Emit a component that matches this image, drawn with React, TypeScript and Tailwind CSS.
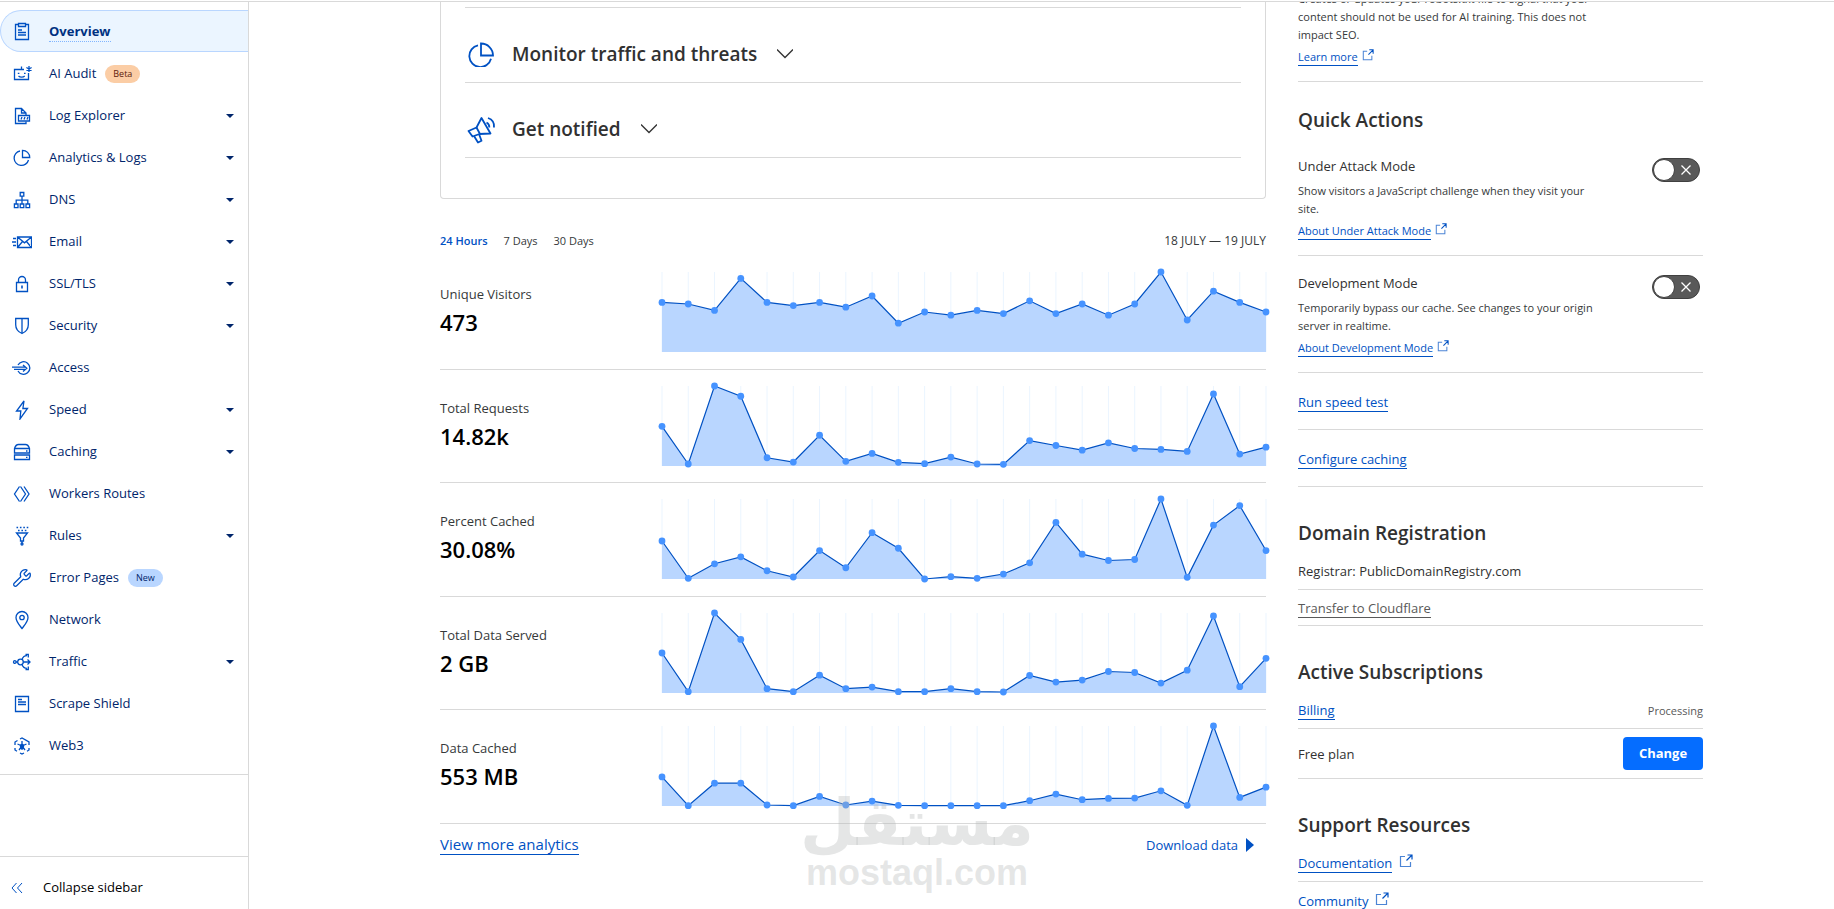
import { useState, type ReactNode } from "react";
import { Wrench } from "lucide-react";

type IconName =
  | "overview"
  | "audit"
  | "log"
  | "pie"
  | "dns"
  | "email"
  | "lock"
  | "shield"
  | "access"
  | "bolt"
  | "cache"
  | "workers"
  | "rules"
  | "wrench"
  | "pin"
  | "traffic"
  | "page"
  | "web3";

const NAV_ITEMS: {
  label: string;
  icon: IconName;
  expandable?: boolean;
  badge?: { text: string; className: string };
}[] = [
  { label: "Overview", icon: "overview" },
  { label: "AI Audit", icon: "audit", badge: { text: "Beta", className: "bg-[#fbcda5] text-[#5c1a0b]" } },
  { label: "Log Explorer", icon: "log", expandable: true },
  { label: "Analytics & Logs", icon: "pie", expandable: true },
  { label: "DNS", icon: "dns", expandable: true },
  { label: "Email", icon: "email", expandable: true },
  { label: "SSL/TLS", icon: "lock", expandable: true },
  { label: "Security", icon: "shield", expandable: true },
  { label: "Access", icon: "access" },
  { label: "Speed", icon: "bolt", expandable: true },
  { label: "Caching", icon: "cache", expandable: true },
  { label: "Workers Routes", icon: "workers" },
  { label: "Rules", icon: "rules", expandable: true },
  { label: "Error Pages", icon: "wrench", badge: { text: "New", className: "bg-[#b9d6ff] text-[#00256b]" } },
  { label: "Network", icon: "pin" },
  { label: "Traffic", icon: "traffic", expandable: true },
  { label: "Scrape Shield", icon: "page" },
  { label: "Web3", icon: "web3" },
];

const METRICS: { label: string; value: string; max: number; points: number[] }[] = [
  {
    label: "Unique Visitors",
    value: "473",
    max: 50,
    points: [31, 30, 26, 46, 31, 29, 31, 28, 35, 18, 25, 23, 26, 24, 32, 24, 30, 23, 30, 50, 20, 38, 31, 25],
  },
  {
    label: "Total Requests",
    value: "14.82k",
    max: 242,
    points: [120, 6, 242, 211, 25, 12, 93, 14, 38, 11, 7, 27, 6, 5, 77, 62, 48, 70, 53, 50, 44, 218, 36, 57],
  },
  {
    label: "Percent Cached",
    value: "30.08%",
    max: 242,
    points: [115, 2, 46, 67, 25, 6, 86, 34, 140, 93, 0, 7, 2, 15, 49, 171, 75, 56, 59, 242, 5, 163, 222, 86],
  },
  {
    label: "Total Data Served",
    value: "2 GB",
    max: 242,
    points: [121, 4, 242, 162, 13, 4, 54, 13, 18, 4, 4, 13, 4, 3, 53, 33, 39, 65, 62, 30, 69, 233, 19, 105],
  },
  {
    label: "Data Cached",
    value: "553 MB",
    max: 242,
    points: [88, 1, 69, 69, 3, 1, 29, 3, 15, 2, 1, 1, 1, 1, 16, 36, 19, 23, 24, 46, 2, 242, 26, 57],
  },
];

const RANGES = ["24 Hours", "7 Days", "30 Days"];

const ICON_PATHS: Record<Exclude<IconName, "wrench">, ReactNode> = {
  overview: (
    <>
      <path d="M6 2.5H3.5v15h13v-15H14" />
      <path d="M6.5 1.5h7v3h-7zM6 8h4M6 10.5h8M6 13h8" />
    </>
  ),
  audit: (
    <>
      <path d="M12 5.5H2.5v10h14V9M9.5 5.5v-3" />
      <path d="M5.8 9.3h1.6M12 9.3h1.6M6.5 12c1.5 1.4 4.8 1.4 6.2 0" />
      <path d="M17 2v6M14.4 3.5l5.2 3M14.4 6.5l5.2-3" />
    </>
  ),
  log: (
    <>
      <path d="M6 17.5H3.5v-15h6l4.5 4.5v2M9.5 2.5V7H14M14 15.5v2H5" />
      <path d="M6.5 9.5h11v5.5h-11z" />
      <path d="M9 13.5l1-2.5M12 13.5l1-2.5M15 13.5l1-2.5" />
    </>
  ),
  pie: (
    <>
      <path d="M8 3a7.3 7.3 0 1 0 8.5 9" />
      <path d="M10.5 2.3v7.2h7.2a7.2 7.2 0 0 0-7.2-7.2z" />
    </>
  ),
  dns: (
    <path d="M8.2 2.5h3.6v3.6H8.2zM2.4 14h3.6v3.6H2.4zM8.2 14h3.6v3.6H8.2zM14 14h3.6v3.6H14zM10 6.1V14M4.2 14v-3.8h11.6V14" />
  ),
  email: (
    <>
      <path d="M5.5 5h14v10.5h-14zM5.5 5l7 5.8 7-5.8M5.5 15.5l5-6M19.5 15.5l-5-6" />
      <path d="M1 6.5h3M0 10h4M1 13.5h3" />
    </>
  ),
  lock: (
    <>
      <path d="M4.5 8.5h11v9h-11zM6.5 8.5V6a3.5 3.5 0 0 1 7 0v2.5" />
      <path d="M10 11.5v3" strokeWidth="1.6" />
    </>
  ),
  shield: <path d="M3.7 2.5h12.6v6.2c0 4.4-2.7 7.2-6.3 8.8-3.6-1.6-6.3-4.4-6.3-8.8zM10 2.5v15" />,
  access: (
    <>
      <path d="M6 7a6.3 6.3 0 1 1 0 6" />
      <path d="M0 9.2h13.5M2 11.4h11.5M11 7l3.8 3.3L11 13.6" />
    </>
  ),
  bolt: <path d="M12 1L4.5 11h4.3L8 19l7.5-10.5h-4.6z" />,
  cache: (
    <>
      <path d="M2.5 6.5c.8-2.500 2-4 4-4h7c2 0 3.200 1.500 4 4V11h-15zM2.5 6.5h15M2.5 13h15v4.5h-15z" />
      <path d="M14 9h1.5M14 15.3h1.5" />
    </>
  ),
  workers: <path d="M7.5 2.5L2.5 10l5 7.5M8.5 2.5l5 7.5-5 7.5M12 2.5l5 7.5-5 7.5" />,
  rules: (
    <>
      <path d="M4.5 1.5h12M6 4.5h9" strokeDasharray="1.6 1.8" />
      <path d="M4.5 7h11l-4 5v3h-3v-3zM10 15v2" />
      <circle cx="10" cy="18" r="1" />
    </>
  ),
  pin: (
    <>
      <path d="M10 18.5C7 14.5 4 11.5 4 7.5a6 6 0 0 1 12 0c0 4-3 7-6 11z" />
      <circle cx="10" cy="7.5" r="2.2" />
    </>
  ),
  traffic: (
    <>
      <circle cx="2.8" cy="10" r="1.3" />
      <circle cx="8.5" cy="10" r="2.8" />
      <path d="M4 10h1.7M11.3 10H18M15.5 7.5L18 10l-2.5 2.5M10 7.5c1-3 2.5-3.8 5-3.8M13.5 2.500h2.8v3M10 12.500c1 3 2.5 3.8 5 3.8M13.5 17.500h2.8v-3" />
    </>
  ),
  page: <path d="M3.5 2.5h13v15h-13zM6 5.500h4M6 8h8M6 10.500h8" />,
  web3: (
    <>
      <path d="M8 3l2-1 7 4v3M17 12v2l-2 1.200M12 17l-2 1-2-1M5 15.200L3 14v-2M3 9V6l2.500-1.500" />
      <path d="M10 5v5M10 10l4.500-2M10 10L5.500 8M10 10l3 4M10 10l-3 4M10 10v4" />
      <circle cx="10" cy="10" r="1.600" fill="currentColor" />
    </>
  ),
};

function NavIcon({ name }: { name: IconName }) {
  if (name === "wrench") {
    return <Wrench className="w-5 h-5 shrink-0 text-[#0051c3]" strokeWidth={1.5} />;
  }
  return (
    <svg
      viewBox="0 0 20 20"
      className="w-5 h-5 shrink-0 text-[#0051c3]"
      fill="none"
      stroke="currentColor"
      strokeWidth="1.3"
      aria-hidden="true"
    >
      {ICON_PATHS[name]}
    </svg>
  );
}

function Sidebar() {
  return (
    <aside className="flex w-[249px] shrink-0 flex-col border-r border-[#d9d9d9] text-[13px]">
      <nav className="border-b border-[#d9d9d9] py-2">
        {NAV_ITEMS.map((item, i) => {
          const active = i === 0;
          return (
            <a
              key={item.label}
              href="#"
              className={`flex h-[42px] items-center pr-[14px] pt-0.5 ${
                active
                  ? "rounded-l-full border-y border-l border-[#b9d6ff] bg-[#ebf5ff] pl-[11px] font-bold text-[#003181]"
                  : "pl-3 text-[#00256b]"
              }`}
            >
              <NavIcon name={item.icon} />
              <span className={`ml-[17px] ${active ? "border-b border-dotted border-[#82b6ff]" : ""}`}>
                {item.label}
              </span>
              {item.badge && (
                <span className={`ml-[9px] flex h-[18px] items-center rounded-full px-2 text-[9px] ${item.badge.className}`}>
                  {item.badge.text}
                </span>
              )}
              {item.expandable && (
                <svg viewBox="0 0 8 4" className="ml-auto h-1 w-2" aria-hidden="true">
                  <path d="M0 0h8L4 4z" fill="#00256b" />
                </svg>
              )}
            </a>
          );
        })}
      </nav>
      <button className="mt-auto flex h-[53px] items-center gap-5 border-t border-[#d9d9d9] pl-[11px] pt-[10px] text-left text-black">
        <svg viewBox="0 0 12 12" className="h-3 w-3" fill="none" stroke="#0051c3" aria-hidden="true">
          <path d="M5.5 1L1 6l4.5 5M11 1L6.5 6l4.5 5" />
        </svg>
        Collapse sidebar
      </button>
    </aside>
  );
}

function AreaChart({ points, max, label }: { points: number[]; max: number; label: string }) {
  const width = 604;
  const height = 80;
  const coords = points.map((p, i) => ({
    x: (i * width) / (points.length - 1),
    y: height - (p / max) * height,
  }));
  const line = coords.map((c) => `${c.x},${c.y}`).join(" ");

  return (
    <svg viewBox={`0 0 ${width} ${height}`} className="min-w-0 flex-1 overflow-visible" role="img" aria-label={label}>
      {coords.map((c) => (
        <line key={c.x} x1={c.x} x2={c.x} y1="0" y2={height} stroke="#ebf5ff" />
      ))}
      <polygon points={`0,${height} ${line} ${width},${height}`} fill="#b9d6ff" />
      <polyline points={line} fill="none" stroke="#0051c3" strokeWidth="1.2" />
      {coords.map((c) => (
        <circle key={c.x} cx={c.x} cy={c.y} r="3.4" fill="#4693ff" />
      ))}
    </svg>
  );
}

function SetupRow({ icon, title }: { icon: ReactNode; title: string }) {
  return (
    <button className="flex w-full items-center border-b border-[#d9d9d9] pb-[14px] pl-[3px] pt-8 text-left">
      {icon}
      <span className="ml-[18px] text-[19px] font-semibold leading-[28px] text-[#313131]">{title}</span>
      <svg
        viewBox="0 0 16 10"
        className="ml-5 h-[10px] w-4"
        fill="none"
        stroke="#313131"
        strokeWidth="1.3"
        aria-hidden="true"
      >
        <path d="M0 .5l8 8 8-8" />
      </svg>
    </button>
  );
}

function Overview() {
  const [range, setRange] = useState(RANGES[0]);

  return (
    <section className="min-w-0 flex-1">
      {/* Setup checklist */}
      <div className="rounded-b border-x border-b border-[#d9d9d9] px-6 pb-10">
        <div className="h-[6px] border-b border-[#d9d9d9]" />
        <SetupRow
          title="Monitor traffic and threats"
          icon={
            <svg viewBox="0 0 26 26" className="h-[26px] w-[26px]" fill="none" stroke="#0051c3" strokeWidth="1.8" aria-hidden="true">
              <path d="M10 4.300a11 11 0 1 0 13 13.500" />
              <path d="M13 2.500V14.500h12A12 12 0 0 0 13 2.500z" />
            </svg>
          }
        />
        <SetupRow
          title="Get notified"
          icon={
            <svg viewBox="0 0 26 26" className="h-[26px] w-[26px] overflow-visible" fill="none" stroke="#0051c3" strokeWidth="1.8" strokeLinejoin="round" aria-hidden="true">
              <path d="M8.500 11.500L13.500 2l9 15.500-11 .500-7 2.500L.500 15z" />
              <path d="M8.500 11.500l3.500 6.500M6 20l4 6.500 3.500-1.800-2.500-6.700" />
              <path d="M18.500 6.500c2 1 3 2.800 2.800 5M20 2c4.500 1.500 6.500 5 6 9.500" />
            </svg>
          }
        />
      </div>

      {/* Range tabs */}
      <div className="mt-[33px] flex gap-4 text-[11px] leading-[18px] text-[#36393a]">
        {RANGES.map((r) => (
          <button key={r} onClick={() => setRange(r)} className={r === range ? "font-semibold text-[#0051c3]" : ""}>
            {r}
          </button>
        ))}
        <span className="ml-auto text-[12px]">18 JULY — 19 JULY</span>
      </div>

      {/* Metrics */}
      <div className="mt-[6px] flex h-[568px] flex-col">
        {METRICS.map((m) => (
          <div key={m.label} className="flex flex-1 items-start border-b border-[#d9d9d9] pt-4">
            <div className="w-[222px] shrink-0 pt-3">
              <div className="text-[13px] leading-5 text-[#36393a]">{m.label}</div>
              <div className="mt-[2px] text-[22px] font-semibold leading-8 text-black">{m.value}</div>
            </div>
            <AreaChart points={m.points} max={m.max} label={m.label} />
          </div>
        ))}
      </div>

      <div className="mt-[10px] flex items-start justify-between pr-3 text-[#0051c3]">
        <a href="#" className="border-b border-[#0051c3] text-[15px] leading-5">
          View more analytics
        </a>
        <button className="flex items-center gap-2 text-[13px] leading-[22px]">
          Download data
          <svg viewBox="0 0 8 14" className="h-[14px] w-2" aria-hidden="true">
            <path d="M0 0l8 7-8 7z" fill="#0051c3" />
          </svg>
        </button>
      </div>
    </section>
  );
}

function ExternalIcon({ className }: { className: string }) {
  return (
    <svg viewBox="0 0 14 14" className={className} fill="none" stroke="#0051c3" strokeWidth="1.2" aria-hidden="true">
      <path d="M6 2.500H1.500v10h10V8" opacity="0.7" />
      <path d="M8.500 1h4.500v4.500M13 1L7.500 6.500" />
    </svg>
  );
}

function SmallLink({ children }: { children: ReactNode }) {
  return (
    <div className="mt-[5px] flex items-start gap-1">
      <a href="#" className="border-b border-[#0051c3] text-[11px] leading-4 text-[#0051c3]">
        {children}
      </a>
      <ExternalIcon className="h-3 w-3" />
    </div>
  );
}

function TextLink({ children, muted }: { children: ReactNode; muted?: boolean }) {
  return (
    <a
      href="#"
      className={`border-b text-[13px] leading-[18px] ${
        muted ? "border-[#595959] text-[#595959]" : "border-[#0051c3] text-[#0051c3]"
      }`}
    >
      {children}
    </a>
  );
}

function Heading({ children }: { children: ReactNode }) {
  return <h2 className="text-[19px] font-semibold leading-[28px] text-[#313131]">{children}</h2>;
}

function ModeSetting({ title, text, link }: { title: string; text: string; link: string }) {
  return (
    <div className="flex items-start justify-between border-b border-[#d9d9d9] pb-[15px] pr-[3px] pt-[17px]">
      <div className="w-[310px]">
        <h3 className="text-[13px] leading-5 text-[#313131]">{title}</h3>
        <p className="mt-[6px] text-[11px] leading-[18px] text-[#36393a]">{text}</p>
        <SmallLink>{link}</SmallLink>
      </div>
      <label className="mt-[2px] flex h-6 w-12 cursor-pointer items-center justify-between rounded-full border border-[#404040] bg-[#595959] pr-2">
        <input type="checkbox" role="switch" aria-label={title} className="sr-only" />
        <span className="h-[22px] w-[22px] rounded-full border border-[#404040] bg-white" />
        <svg viewBox="0 0 10 10" className="h-[10px] w-[10px]" stroke="#fff" strokeWidth="1.3" aria-hidden="true">
          <path d="M.5.5l9 9M9.5.5l-9 9" />
        </svg>
      </label>
    </div>
  );
}

function Details() {
  return (
    <aside className="-mt-3 w-[405px] shrink-0">
      <div className="border-b border-[#d9d9d9] pb-[15px]">
        <p className="w-[310px] text-[11px] leading-[18px] text-[#36393a]">
          Creates or updates your robots.txt file to signal that your content should not be used for AI training. This
          does not impact SEO.
        </p>
        <SmallLink>Learn more</SmallLink>
      </div>

      <div className="mb-[5px] mt-6">
        <Heading>Quick Actions</Heading>
      </div>
      <ModeSetting
        title="Under Attack Mode"
        text="Show visitors a JavaScript challenge when they visit your site."
        link="About Under Attack Mode"
      />
      <ModeSetting
        title="Development Mode"
        text="Temporarily bypass our cache. See changes to your origin server in realtime."
        link="About Development Mode"
      />
      <div className="flex border-b border-[#d9d9d9] pb-[17px] pt-5">
        <TextLink>Run speed test</TextLink>
      </div>
      <div className="mb-8 flex border-b border-[#d9d9d9] pb-[17px] pt-5">
        <TextLink>Configure caching</TextLink>
      </div>

      <Heading>Domain Registration</Heading>
      <div className="border-b border-[#d9d9d9] pb-2 pt-[14px] text-[13px] leading-5 text-[#313131]">
        Registrar: PublicDomainRegistry.com
      </div>
      <div className="mb-8 flex border-b border-[#d9d9d9] pb-[7px] pt-[9px]">
        <TextLink muted>Transfer to Cloudflare</TextLink>
      </div>

      <Heading>Active Subscriptions</Heading>
      <div className="flex items-center justify-between border-b border-[#d9d9d9] pb-2 pt-[15px]">
        <TextLink>Billing</TextLink>
        <span className="text-[11px] leading-4 text-[#595959]">Processing</span>
      </div>
      <div className="mb-8 flex items-center justify-between border-b border-[#d9d9d9] py-2">
        <span className="text-[13px] leading-5 text-[#313131]">Free plan</span>
        <button className="h-[33px] w-20 rounded bg-[#056dff] text-[13px] font-bold text-white">Change</button>
      </div>

      <Heading>Support Resources</Heading>
      <div className="flex items-start gap-[7px] border-b border-[#d9d9d9] pb-2 pt-[15px]">
        <TextLink>Documentation</TextLink>
        <ExternalIcon className="h-[14px] w-[14px]" />
      </div>
      <div className="flex items-start gap-[7px] pt-[10px]">
        <TextLink>Community</TextLink>
        <ExternalIcon className="h-[14px] w-[14px]" />
      </div>
    </aside>
  );
}

function Watermark() {
  return (
    <div className="pointer-events-none absolute bottom-[18px] left-[44%] flex w-[220px] flex-col items-center font-bold text-[#b4b8b8]/35">
      <span dir="rtl" lang="ar" className="font-['DejaVu_Sans',sans-serif] text-[64px] leading-[64px]">
        مستقل
      </span>
      <span className="font-['Liberation_Sans',sans-serif] text-[36px] leading-9">mostaql.com</span>
    </div>
  );
}

export default function App() {
  return (
    <div className="relative flex h-screen overflow-hidden bg-white pt-px font-['Open_Sans','Noto_Sans',sans-serif]">
      <div className="flex min-w-0 flex-1 border-t border-[#d9d9d9]">
        <Sidebar />
        <main className="flex min-w-0 flex-1 justify-center overflow-hidden pl-[60px]">
          <div className="flex w-full max-w-[1263px] items-start gap-8">
            <Overview />
            <Details />
          </div>
        </main>
      </div>
      <Watermark />
    </div>
  );
}
